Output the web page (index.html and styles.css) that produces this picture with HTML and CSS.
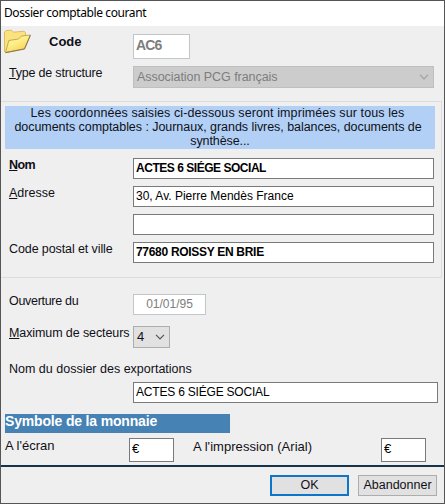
FILE: index.html
```
<!DOCTYPE html>
<html lang="fr">

<head>
    <meta charset="UTF-8" />
    <meta name="viewport" content="width=device-width, initial-scale=1.0" />
    <title>Dossier comptable courant</title>

    <link rel="stylesheet" href="styles.css">
</head>

<body>
    <form class="window">
        <header>Dossier comptable courant</header>

        <main>
            <div class="row row-code">
                <svg class="folder" width="28" height="26" viewBox="0 0 28 26">
                    <defs>
                        <linearGradient id="front" x1="0" y1="0" x2="0.7" y2="1">
                            <stop offset="0" stop-color="#fffcb0" />
                            <stop offset="0.5" stop-color="#fdee86" />
                            <stop offset="1" stop-color="#f3cf50" />
                        </linearGradient>
                    </defs>
                    <path d="M1.5 3 L3 1.5 L8.5 1.2 L10.5 3.2 L21 2.2 L22.5 3.5 L22.5 17 L3 23.5 L1.5 22.5 Z" fill="#fbe27c" stroke="#d3b05c" stroke-width="0.8" />
                    <path d="M2.5 23.5 L5.8 11.5 L15.5 10 L18.5 7 L27.4 6 L21.5 19.8 Z" fill="url(#front)" stroke="#b8954c" stroke-width="0.8" />
                    <path d="M2.5 23.7 L21.5 20 L27.4 6.2" fill="none" stroke="#8f7444" />
                </svg>
                <label for="code">Code</label>
                <input type="text" id="code" class="code" value="AC6" disabled>
            </div>

            <div class="row row-type">
                <label for="type"><u>T</u>ype de structure</label>
                <div class="select disabled" id="type">
                    <span>Association PCG français</span>
                    <svg width="10" height="6" viewBox="0 0 10 6"><path d="M1 0.8 L5 4.8 L9 0.8" /></svg>
                </div>
            </div>

            <fieldset>
                <p class="notice">
                    <span class="line-1">Les coordonnées saisies ci-dessous seront imprimées sur tous les</span>
                    <span class="line-2">documents comptables : Journaux, grands livres, balances, documents de</span>
                    <span class="line-3">synthèse...</span>
                </p>
                <div class="row row-nom">
                    <label for="nom"><u>N</u>om</label>
                    <input type="text" id="nom" value="ACTES 6 SIÉGE SOCIAL">
                </div>
                <div class="row row-adresse">
                    <label for="adresse"><u>A</u>dresse</label>
                    <input type="text" id="adresse" value="30, Av. Pierre Mendès France">
                </div>
                <div class="row">
                    <label for="adresse2"></label>
                    <input type="text" id="adresse2">
                </div>
                <div class="row row-ville">
                    <label for="ville">Code postal et ville</label>
                    <input type="text" id="ville" value="77680 ROISSY EN BRIE">
                </div>
            </fieldset>

            <div class="row row-date">
                <label for="date">Ouverture du</label>
                <input type="text" id="date" class="date" value="01/01/95" disabled>
            </div>
            <div class="row row-secteurs">
                <label for="secteurs"><u>M</u>aximum de secteurs</label>
                <div class="select small" id="secteurs">
                    <span>4</span>
                    <svg width="10" height="6" viewBox="0 0 10 6"><path d="M1 0.8 L5 4.8 L9 0.8" /></svg>
                </div>
            </div>
            <div class="export">
                <label for="export">Nom du dossier des exportations</label>
                <input type="text" id="export" value="ACTES 6 SIÉGE SOCIAL">
            </div>

            <h2>Symbole de la monnaie</h2>
            <div class="monnaie">
                <label for="ecran" class="label-ecran">A l'écran</label>
                <input type="text" id="ecran" value="€">
                <label for="impression" class="label-impression">A l'impression (Arial)</label>
                <input type="text" id="impression" value="€">
            </div>
        </main>

        <footer>
            <button type="button" class="button-ok">OK</button>
            <button type="button">Abandonner</button>
        </footer>
    </form>
</body>

</html>
```
FILE: styles.css
```
:root {
    --bg: #efefef;
    --border: #7a7a7a;
    --text: #101018;
    --text-disabled: #7d7d7d;
    --bg-notice: #b2d0f5;
    --bg-title: #4682b4;
    --line: #17344a;
}

* {
    box-sizing: border-box;
}

body {
    margin: 0;
    font-family: "Liberation Sans", Arial, sans-serif;
    font-size: 13px;
    color: var(--text);
}

.window {
    display: flex;
    flex-direction: column;
    width: 445px;
    height: 504px;
    border: 1px solid #555;
    background-color: var(--bg);
}

header {
    height: 25px;
    padding-left: 3px;
    background-color: white;
    color: black;
    font: 12px/24px "Noto Sans", sans-serif;
    letter-spacing: -0.4px;
}

main {
    height: 439px;
}

label {
    line-height: 15px;
    white-space: nowrap;
}

input {
    height: 21px;
    margin: 0;
    padding: 0 2px 2px;
    border: 1px solid var(--border);
    border-radius: 0;
    background-color: white;
    color: black;
    font: 12px "Liberation Sans", Arial, sans-serif;
}

input:disabled {
    border-color: #c3c6c9;
    color: var(--text-disabled);
}

.row {
    display: flex;
    align-items: flex-start;
    padding-left: 8px;

    label {
        width: 124px;
        flex: none;
        font-size: 12.5px;
        letter-spacing: -0.1px;
    }
}

.row-code {
    height: 40px;
    padding: 3px 0 0 2px;

    .folder {
        flex: none;
    }

    label {
        width: 102px;
        padding: 5px 0 0 18px;
        font-size: 13px;
        font-weight: bold;
        letter-spacing: 0;
    }

    .code {
        width: 57px;
        height: 25px;
        margin-top: 5px;
        padding: 0 2px 4px;
        font-size: 14px;
        font-weight: bold;
        letter-spacing: -0.8px;
    }
}

.row-type label {
    letter-spacing: -0.2px;
}

.select {
    display: flex;
    align-items: center;
    justify-content: space-between;
    width: 301px;
    height: 22px;
    padding: 0 4px 0 3px;
    border: 1px solid #adadad;
    background-color: #e1e1e1;

    path {
        fill: none;
        stroke: #555;
        stroke-width: 1.2;
    }
}

.select.disabled {
    border-color: #bfbfbf;
    background-color: #ccc;
    color: var(--text-disabled);
    font-size: 12.5px;
    letter-spacing: -0.05px;

    path {
        stroke: #aaa;
        stroke-width: 1.6;
    }
}

.select.small {
    width: 37px;

    span {
        padding-bottom: 2px;
    }
}

fieldset {
    height: 177px;
    width: 441px;
    margin: 13px 0 0;
    padding: 4px 0 0;
    border: 1px solid #dcdcdc;
    border-left: none;

    .row {
        height: 28px;
    }

    input {
        width: 301px;
    }
}

.notice {
    display: flex;
    flex-direction: column;
    align-items: center;
    width: 430px;
    height: 43px;
    margin: 0 0 9px 4px;
    background-color: var(--bg-notice);
    font-size: 12.5px;
    line-height: 14px;
    white-space: nowrap;

    .line-1 {
        letter-spacing: 0.1px;
        margin-right: 5px;
    }

    .line-2 {
        letter-spacing: -0.05px;
        margin-right: 4px;
    }

    .line-3 {
        letter-spacing: -0.1px;
    }
}

.row-nom {
    label {
        font-weight: bold;
        letter-spacing: -0.6px;
    }

    input {
        font-weight: bold;
        letter-spacing: -0.47px;
    }
}

.row-adresse {
    label {
        letter-spacing: 0;
    }

    input {
        letter-spacing: 0;
    }
}

.row-ville input {
    font-weight: bold;
    letter-spacing: -0.3px;
}

.row-date {
    height: 32px;
    margin-top: 16px;

    label {
        letter-spacing: -0.3px;
    }

    .date {
        width: 73px;
        text-align: center;
    }
}

.row-secteurs {
    height: 35px;
}

.export {
    display: flex;
    flex-direction: column;
    height: 53px;
    padding-left: 8px;

    label {
        padding-top: 1px;
        font-size: 12.5px;
    }

    input {
        width: 305px;
        margin: 5px 0 0 124px;
        letter-spacing: -0.2px;
    }
}

h2 {
    width: 225px;
    height: 19px;
    margin: 0 0 5px 4px;
    background-color: var(--bg-title);
    color: white;
    font-size: 14px;
    line-height: 15px;
    letter-spacing: -0.17px;
}

.monnaie {
    display: flex;
    padding-left: 4px;

    input {
        width: 45px;
        height: 24px;
        padding-bottom: 3px;
        font-size: 13px;
    }

    .label-ecran {
        width: 124px;
    }

    .label-impression {
        width: 207px;
        padding: 1px 0 0 19px;
        letter-spacing: 0.05px;
    }
}

footer {
    display: flex;
    flex: 1;
    justify-content: flex-end;
    align-items: flex-start;
    gap: 9px;
    padding: 8px 7px 0 0;
    border-top: 2px solid var(--line);
}

button {
    width: 79px;
    height: 21px;
    padding: 0 0 2px;
    border: 1px solid #adadad;
    background-color: #e1e1e1;
    color: var(--text);
    font: 12.5px "Liberation Sans", Arial, sans-serif;
}

.button-ok {
    border: 2px solid #0f75c8;
}
```
